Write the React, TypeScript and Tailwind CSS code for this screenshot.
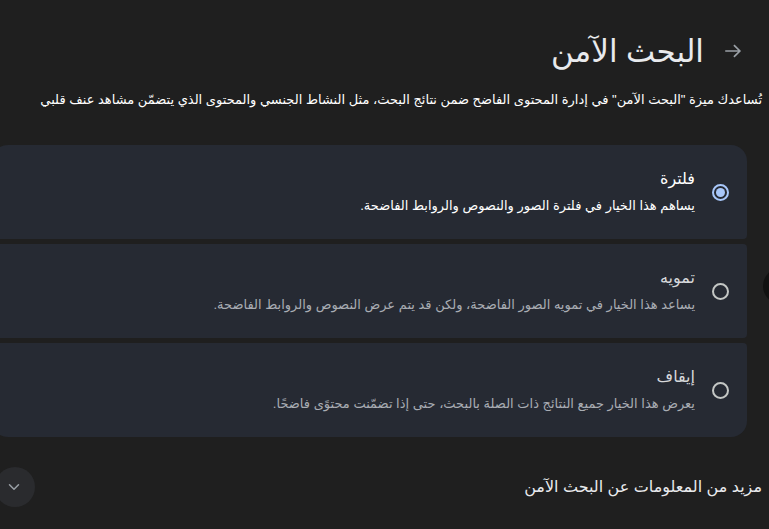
import { ChevronDown } from "lucide-react";

const options = [
  {
    title: "فلترة",
    desc: "يساهم هذا الخيار في فلترة الصور والنصوص والروابط الفاضحة.",
    selected: true,
  },
  {
    title: "تمويه",
    desc: "يساعد هذا الخيار في تمويه الصور الفاضحة، ولكن قد يتم عرض النصوص والروابط الفاضحة.",
    selected: false,
  },
  {
    title: "إيقاف",
    desc: "يعرض هذا الخيار جميع النتائج ذات الصلة بالبحث، حتى إذا تضمّنت محتوًى فاضحًا.",
    selected: false,
  },
];

const Radio = ({ on }: { on: boolean }) =>
  on ? (
    <div className="w-[17px] h-[17px] rounded-full border-2 border-[#a8c7fa] flex items-center justify-center shrink-0">
      <div className="w-[9px] h-[9px] rounded-full bg-[#a8c7fa]" />
    </div>
  ) : (
    <div className="w-[17px] h-[17px] rounded-full border-2 border-[#c4c7c5] shrink-0" />
  );

export default function App() {
  return (
    <div
      dir="rtl"
      className="relative w-[769px] h-[529px] overflow-hidden bg-[#1f1f1f] text-[#e3e3e3] font-['Liberation_Sans','DejaVu_Sans',sans-serif]"
    >
      {/* header */}
      <div className="flex items-center gap-[18px] pr-[25px] pt-[28px] h-[74px]">
        <svg width="22" height="22" viewBox="0 0 24 24" className="text-[#9aa0a6]">
          <path d="M3.5 12h16M13 5.5l6.5 6.5-6.5 6.5" fill="none" stroke="currentColor" strokeWidth="1.8" />
        </svg>
        <h1 className="text-[31px] leading-none text-[#e8eaed]">البحث الآمن</h1>
      </div>

      <p className="pr-[7px] mt-[17px] text-[13px] leading-[18px] text-white">
        تُساعدك ميزة "البحث الآمن" في إدارة المحتوى الفاضح ضمن نتائج البحث، مثل النشاط الجنسي والمحتوى الذي يتضمّن مشاهد عنف قلبي
      </p>

      {/* options */}
      <div className="mt-[36px] mr-[22px] ml-[-8px] flex flex-col gap-[5px]">
        {options.map((o, i) => (
          <div
            key={i}
            className={`h-[94px] bg-[#262a33] flex items-center gap-[17px] pr-[18px] ${
              i === 0 ? "rounded-t-[16px] rounded-b-[4px]" : i === 2 ? "rounded-b-[16px] rounded-t-[4px]" : "rounded-[4px]"
            }`}
          >
            <Radio on={o.selected} />
            <div className="flex flex-col gap-[9px] -mt-[2px]">
              <div className={`text-[16px] leading-[20px] ${o.selected ? "text-white" : "text-[#d6d8db]"}`}>{o.title}</div>
              <div className={`text-[13px] leading-[16px] ${o.selected ? "text-white" : "text-[#a9adb3]"}`}>{o.desc}</div>
            </div>
          </div>
        ))}
      </div>

      {/* more info */}
      <div className="mt-[30px] flex items-center justify-between pr-[7px] ml-[-5px]">
        <div className="text-[16px] text-[#e8eaed]">مزيد من المعلومات عن البحث الآمن</div>
        <div className="w-[40px] h-[40px] rounded-full bg-[#2a2b2e] flex items-center justify-center">
          <ChevronDown size={18} className="text-[#9aa0a6] ml-[-2px]" />
        </div>
      </div>

      {/* floating element at right edge */}
      <div className="absolute left-[763px] top-[268px] w-[36px] h-[36px] rounded-full bg-[#111111]" />
    </div>
  );
}
